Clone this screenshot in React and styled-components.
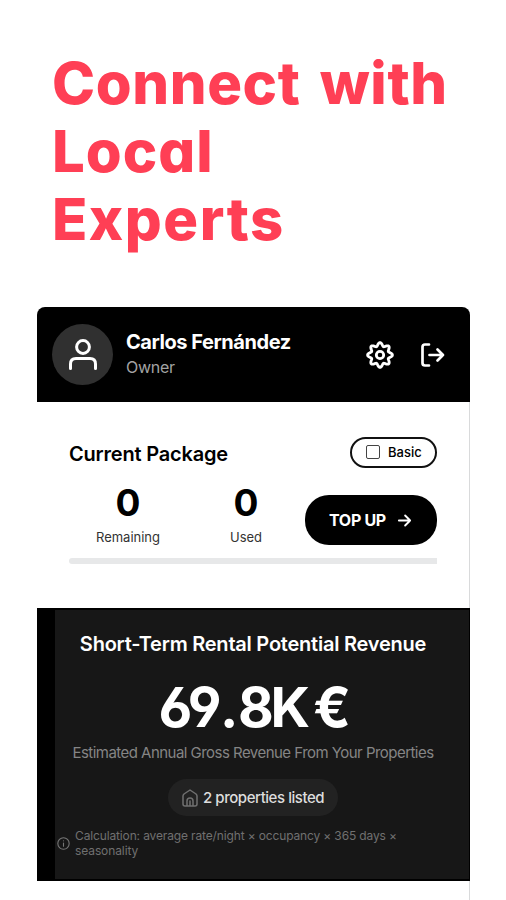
import React from "react";
import styled, { createGlobalStyle } from "styled-components";

const Global = createGlobalStyle`
  * { box-sizing: border-box; }
  html, body { margin: 0; background: #fff; }
  body { width: 506px; height: 900px; overflow: hidden; font-family: Inter, "Liberation Sans", sans-serif; }
  h1, h2, p { margin: 0; }
`;

const Page = styled.main`
  width: 506px;
  height: 900px;
  padding: 49px 36px 0 37px;
  overflow: hidden;
`;

const Headline = styled.h1`
  height: 258px;
  padding-left: 15px;
  color: #ff3f55;
  font-size: 58px;
  line-height: 68px;
  font-weight: 800;
  font-feature-settings: "cv11";
`;

const Line = styled.span`
  display: block;
  width: max-content;
  white-space: nowrap;
  letter-spacing: ${(p) => p.$ls || 0}px;
  word-spacing: 6px;
`;

const Device = styled.section`
  width: 433px;
  height: 593px;
  border-right: 1px solid #d9dadb;
  border-radius: 8px 8px 0 0;
`;

const Header = styled.header`
  display: flex;
  align-items: center;
  width: 433px;
  height: 95px;
  padding: 0 25px 0 15px;
  background: #000;
  color: #fff;
  border-radius: 8px 8px 0 0;
`;

const Avatar = styled.div`
  display: grid;
  place-items: center;
  width: 61px;
  height: 61px;
  border-radius: 50%;
  background: #303030;
`;

const Identity = styled.div`
  flex: 1;
  padding-left: 13px;
`;

const Text = styled.p`
  width: max-content;
  white-space: nowrap;
  color: ${(p) => p.$color || "#000"};
  font-size: ${(p) => p.$size}px;
  line-height: ${(p) => p.$lh}px;
  font-weight: ${(p) => p.$weight || 400};
  letter-spacing: ${(p) => p.$ls || 0}px;
`;

const Amount = styled(Text)`
  font-feature-settings: "cv03", "cv04", "ss01";
  word-spacing: -3px;
`;

const Point = styled.span`
  margin: 0 3px 0 2px;
`;

const Actions = styled.div`
  display: flex;
  align-items: center;
  gap: 27px;
`;

const Package = styled.section`
  height: 206px;
  padding: 34px 32px 0;
`;

const PackageTop = styled.div`
  display: flex;
  justify-content: space-between;
  align-items: center;
  height: 32px;
`;

const Title = styled(Text)`
  padding-top: 3px;
`;

const Badge = styled.div`
  display: flex;
  align-items: center;
  gap: 8px;
  width: 87px;
  height: 31px;
  padding-left: 14px;
  border: 2px solid #111;
  border-radius: 16px;
`;

const Box = styled.span`
  width: 14px;
  height: 14px;
  border: 1.5px solid #444;
  border-radius: 2px;
`;

const Usage = styled.div`
  display: grid;
  grid-template-columns: 118px 118px 132px;
  height: 81px;
`;

const Stat = styled.div`
  display: flex;
  flex-direction: column;
  align-items: center;
  padding-top: 14px;
  gap: 1px;
`;

const TopUp = styled.button`
  display: flex;
  align-items: center;
  gap: 11px;
  width: 132px;
  height: 50px;
  margin-top: 27px;
  padding: 0 0 0 24px;
  border: 0;
  border-radius: 24px;
  background: #000;
  font-family: inherit;
`;

const Track = styled.div`
  height: 6px;
  margin-top: 9px;
  border-radius: 3px 0 0 3px;
  background: #e7e8e9;
`;

const Revenue = styled.section`
  display: flex;
  flex-direction: column;
  align-items: center;
  width: 433px;
  height: 273px;
  padding-top: 21px;
  border-style: solid;
  border-color: #000;
  border-width: 2px 1px 2px 18px;
  background: #171717;
`;

const Centered = styled.div`
  display: flex;
  justify-content: center;
  width: 100%;
  padding-right: 18px;
  margin-top: ${(p) => p.$top || 0}px;
`;

const Listed = styled.div`
  display: flex;
  align-items: center;
  gap: 5px;
  width: 170px;
  height: 37px;
  padding-left: 14px;
  border-radius: 19px;
  background: #222;
`;

const Note = styled.div`
  display: flex;
  align-items: center;
  gap: 5px;
  width: 100%;
  margin-top: 12px;
  padding-left: 2px;
`;

const Icon = ({ w, h = w, sw = 2, color = "#fff", box = "0 0 24 24", children }) => (
  <svg width={w} height={h} viewBox={box} fill="none" stroke={color} strokeWidth={sw} strokeLinecap="round" strokeLinejoin="round">
    {children}
  </svg>
);

const gear = Array.from({ length: 161 }, (_, i) => {
  const a = (i / 160) * Math.PI * 2;
  const r = 10.7 + 1.7 * Math.cos(8 * a);
  return `${i ? "L" : "M"}${(14 + r * Math.cos(a)).toFixed(2)} ${(14 + r * Math.sin(a)).toFixed(2)}`;
}).join("") + "Z";

export default function App() {
  return (
    <Page>
      <Global />
      <Headline>
        <Line $ls={0.6}>Connect with</Line>
        <Line $ls={1}>Local</Line>
        <Line $ls={1.5}>Experts</Line>
      </Headline>
      <Device>
        <Header>
          <Avatar>
            <Icon w={32} sw={3} box="0 0 32 32">
              <circle cx="16" cy="8" r="6.4" />
              <path d="M3.500 29.500v-4.500q0-5.500 5.500-5.500h14q5.500 0 5.500 5.500v4.500" />
            </Icon>
          </Avatar>
          <Identity>
            <Text $size={20} $lh={26} $weight={700} $ls={-0.45} $color="#fff">Carlos Fernández</Text>
            <Text $size={16} $lh={25} $ls={-0.25} $color="#a3a3a3">Owner</Text>
          </Identity>
          <Actions>
            <Icon w={28} sw={2.8} box="0 0 28 28">
              <path d={gear} />
              <circle cx="14" cy="14" r="3.7" />
            </Icon>
            <Icon w={24} sw={2.7}>
              <path d="M8 1.500H4Q1.500 1.500 1.500 4v16q0 2.500 2.500 2.500h4M8.500 12H22M16.500 6.500 22 12l-5.500 5.500" />
            </Icon>
          </Actions>
        </Header>
        <Package>
          <PackageTop>
            <Title $size={20} $lh={30} $weight={600} $ls={-0.2}>Current Package</Title>
            <Badge>
              <Box />
              <Text $size={13} $lh={20} $weight={500}>Basic</Text>
            </Badge>
          </PackageTop>
          <Usage>
            <Stat>
              <Text $size={37} $lh={42} $weight={700}>0</Text>
              <Text $size={13} $lh={24} $color="#333">Remaining</Text>
            </Stat>
            <Stat>
              <Text $size={37} $lh={42} $weight={700}>0</Text>
              <Text $size={13} $lh={24} $color="#333">Used</Text>
            </Stat>
            <TopUp>
              <Text $size={16} $lh={24} $weight={700} $ls={-0.3} $color="#fff">TOP UP</Text>
              <Icon w={15} sw={3}>
                <path d="M3 12h18M13 4l8 8-8 8" />
              </Icon>
            </TopUp>
          </Usage>
          <Track />
        </Package>
        <Revenue>
          <Centered>
            <Text $size={20} $lh={26} $weight={600} $ls={-0.23} $color="#fff">Short-Term Rental Potential Revenue</Text>
          </Centered>
          <Centered $top={20}>
            <Amount $size={55} $lh={60} $weight={700} $ls={-3.4} $color="#fff">69<Point>.</Point>8K €</Amount>
          </Centered>
          <Centered $top={5}>
            <Text $size={15} $lh={22} $ls={-0.53} $color="#858585">Estimated Annual Gross Revenue From Your Properties</Text>
          </Centered>
          <Centered $top={15}>
            <Listed>
              <Icon w={16} h={18} sw={1.5} color="#707070" box="0 0 16 18">
                <path d="M1 7Q1 6 2 5L8 1l6 4q1 1 1 2v8q0 2-2 2H3q-2 0-2-2ZM5 17v-5q0-3 3-3t3 3v5M8 12v5" />
              </Icon>
              <Text $size={15} $lh={22} $weight={500} $ls={-0.45} $color="#ddd">2 properties listed</Text>
            </Listed>
          </Centered>
          <Note>
            <Icon w={13} sw={2} color="#777">
              <circle cx="12" cy="12" r="10.500" />
              <path d="M12 11v6M12 7v.1" />
            </Icon>
            <div>
              <Text $size={12} $lh={15} $ls={-0.14} $color="#707070">Calculation: average rate/night × occupancy × 365 days ×</Text>
              <Text $size={12} $lh={15} $ls={-0.1} $color="#707070">seasonality</Text>
            </div>
          </Note>
        </Revenue>
      </Device>
    </Page>
  );
}
